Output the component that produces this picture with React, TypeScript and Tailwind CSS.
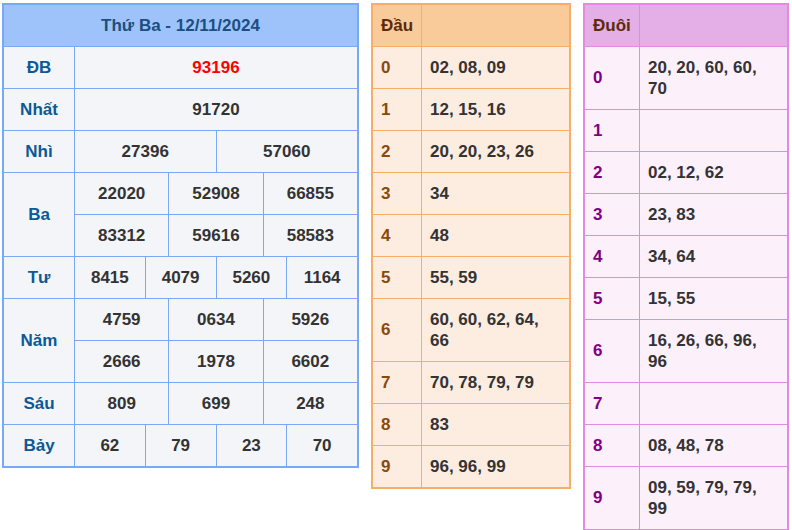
import React from "react";

type PrizeRow = { label: string; lines: string[][]; red?: boolean };

const prizes: PrizeRow[] = [
  { label: "ĐB", lines: [["93196"]], red: true },
  { label: "Nhất", lines: [["91720"]] },
  { label: "Nhì", lines: [["27396", "57060"]] },
  {
    label: "Ba",
    lines: [
      ["22020", "52908", "66855"],
      ["83312", "59616", "58583"],
    ],
  },
  { label: "Tư", lines: [["8415", "4079", "5260", "1164"]] },
  {
    label: "Năm",
    lines: [
      ["4759", "0634", "5926"],
      ["2666", "1978", "6602"],
    ],
  },
  { label: "Sáu", lines: [["809", "699", "248"]] },
  { label: "Bảy", lines: [["62", "79", "23", "70"]] },
];

const dau = [
  "02, 08, 09",
  "12, 15, 16",
  "20, 20, 23, 26",
  "34",
  "48",
  "55, 59",
  "60, 60, 62, 64, 66",
  "70, 78, 79, 79",
  "83",
  "96, 96, 99",
];

const duoi = [
  "20, 20, 60, 60, 70",
  "",
  "02, 12, 62",
  "23, 83",
  "34, 64",
  "15, 55",
  "16, 26, 66, 96, 96",
  "",
  "08, 48, 78",
  "09, 59, 79, 79, 99",
];

function PrizeTable() {
  return (
    <div className="w-[357px] border-2 border-[#79a9f6] bg-[#f4f5f9]">
      {/* Title */}
      <div className="h-[41px] bg-[#9ec3fb] flex items-center justify-center text-[#1b4f80]">
        Thứ Ba - 12/11/2024
      </div>
      {prizes.map((p) => (
        <div key={p.label} className="flex border-t border-[#79a9f6]">
          <div className="w-[70px] shrink-0 flex items-center justify-center text-[#0b5a97]">
            {p.label}
          </div>
          <div className="flex-1 flex flex-col border-l border-[#79a9f6]">
            {p.lines.map((line, i) => (
              <div
                key={i}
                className={`flex ${i > 0 ? "border-t border-[#79a9f6]" : ""}`}
              >
                {line.map((n, j) => (
                  <div
                    key={j}
                    className={`flex-1 py-[10px] leading-[21px] text-center ${
                      j > 0 ? "border-l border-[#79a9f6]" : ""
                    } ${p.red ? "text-[#ff0000]" : "text-[#333333]"}`}
                  >
                    {n}
                  </div>
                ))}
              </div>
            ))}
          </div>
        </div>
      ))}
    </div>
  );
}

function LotoTable({
  title,
  rows,
  width,
  keyWidth,
  outer,
  headBg,
  bodyBg,
  digitColor,
}: {
  title: string;
  rows: string[];
  width: string;
  keyWidth: string;
  outer: string;
  headBg: string;
  bodyBg: string;
  digitColor: string;
}) {
  return (
    <div className={`${width} border-2 ${outer} ${bodyBg}`}>
      <div className={`flex h-[41px] ${headBg}`}>
        <div className={`${keyWidth} shrink-0 pl-[8px] flex items-center text-[#5b2a0b]`}>
          {title}
        </div>
        <div className={`flex-1 border-l ${outer}`} />
      </div>
      {rows.map((r, i) => (
        <div key={i} className={`flex border-t ${outer}`}>
          <div className={`${keyWidth} shrink-0 pl-[8px] flex items-center ${digitColor}`}>
            {i}
          </div>
          <div
            className={`flex-1 border-l ${outer} pl-[8px] pr-[14px] py-[10px] leading-[21px] min-h-[41px] text-[#333333]`}
          >
            {r}
          </div>
        </div>
      ))}
    </div>
  );
}

export default function App() {
  return (
    <div className="bg-white min-h-screen font-['Liberation_Sans',Arial,sans-serif] font-bold text-[17px]">
      <div className="flex items-start pt-[3px] pl-[2px]">
        <PrizeTable />
        <div className="ml-[12px]">
          <LotoTable
            title="Đầu"
            rows={dau}
            width="w-[200px]"
            keyWidth="w-[48px]"
            outer="border-[#f7ae69]"
            headBg="bg-[#f9ca9a]"
            bodyBg="bg-[#fdece0]"
            digitColor="text-[#8a4a0c]"
          />
        </div>
        <div className="ml-[12px]">
          <LotoTable
            title="Đuôi"
            rows={duoi}
            width="w-[206px]"
            keyWidth="w-[54px]"
            outer="border-[#e48be0]"
            headBg="bg-[#e4aee6]"
            bodyBg="bg-[#fcf0fb]"
            digitColor="text-[#800080]"
          />
        </div>
      </div>
    </div>
  );
}
